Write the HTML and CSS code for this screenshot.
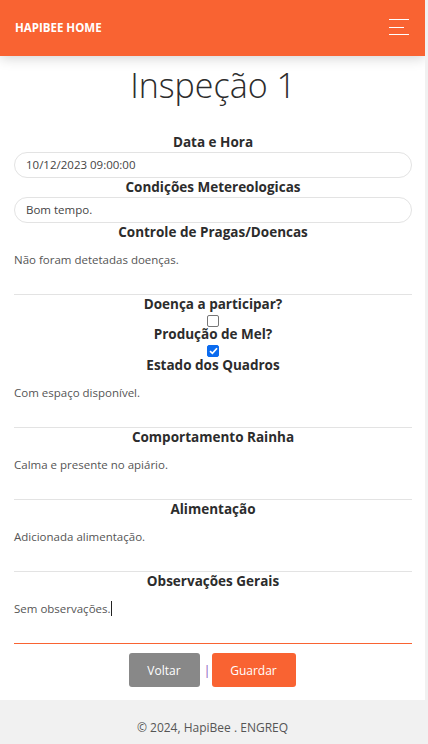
FILE: index.html
```html
<!DOCTYPE html>
<html lang="pt">
<head>
<meta charset="utf-8">
<title>Inspeção 1 - HapiBee</title>
<link rel="stylesheet" href="styles.css">
</head>
<body>
<header class="navbar">
  <a class="brand" href="#">HAPIBEE HOME</a>
  <button class="toggler" aria-label="menu">
    <svg width="20" height="16" viewBox="0 0 20 16">
      <rect x="0" y="0" width="20" height="1" fill="#fff"/>
      <rect x="0" y="8" width="15" height="1" fill="#fff"/>
      <rect x="0" y="15" width="20" height="1" fill="#fff"/>
    </svg>
  </button>
</header>
<main class="content">
  <h2 class="title">Inspeção 1</h2>
  <form class="form">
    <label class="label">Data e Hora</label>
    <div class="input">10/12/2023 09:00:00</div>
    <label class="label">Condições Metereologicas</label>
    <div class="input">Bom tempo.</div>
    <label class="label">Controle de Pragas/Doencas</label>
    <div class="area">Não foram detetadas doenças.</div>
    <label class="label">Doença a participar?</label>
    <div class="check-row"><span class="check"></span></div>
    <label class="label">Produção de Mel?</label>
    <div class="check-row tall"><span class="check checked">
      <svg width="9" height="8" viewBox="0 0 9 8"><path d="M1 4.2 L3.4 6.4 L8 1.2" fill="none" stroke="#fff" stroke-width="1.7"/></svg>
    </span></div>
    <label class="label">Estado dos Quadros</label>
    <div class="area">Com espaço disponível.</div>
    <label class="label">Comportamento Rainha</label>
    <div class="area">Calma e presente no apiário.</div>
    <label class="label">Alimentação</label>
    <div class="area">Adicionada alimentação.</div>
    <label class="label">Observações Gerais</label>
    <div class="area area-focused">Sem observações.<span class="caret"></span></div>
    <div class="actions">
      <button type="button" class="btn btn-gray">Voltar</button>
      <span class="sep">|</span>
      <button type="button" class="btn btn-orange">Guardar</button>
    </div>
  </form>
</main>
<footer class="footer">© 2024, HapiBee . ENGREQ</footer>
</body>
</html>
```
FILE: styles.css
```css
html {
  background: #f1f1f1;
}
body {
  margin: 0 3px 0 0;
  background: #fff;
  font-family: "Open Sans", "Liberation Sans", sans-serif;
  color: #2c2c2c;
}
.navbar {
  height: 56px;
  background: #f96332;
  display: flex;
  align-items: center;
  justify-content: space-between;
  padding: 0 16px 0 15px;
  box-shadow: 0 2px 12px rgba(0, 0, 0, 0.18);
  position: relative;
}
.brand {
  color: #fff;
  text-decoration: none;
  font-size: 11.5px;
  font-weight: 700;
  margin-top: -1px;
}
.toggler {
  background: none;
  border: 0;
  padding: 0;
  display: flex;
  margin-top: -3px;
}
.content {
  padding: 0 13px 0 14px;
}
.title {
  margin: 0;
  padding: 9px 0 28px;
  font-size: 34px;
  font-weight: 300;
  line-height: 40px;
  text-align: center;
  color: #2c2c2c;
}
.form {
  display: flex;
  flex-direction: column;
}
.label {
  display: block;
  text-align: center;
  font-weight: 700;
  font-size: 13.5px;
  line-height: 19px;
  color: #2c2c2c;
}
.input {
  height: 24px;
  border: 1px solid #e3e3e3;
  border-radius: 30px;
  padding: 0 11px;
  font-size: 11.5px;
  line-height: 24px;
  color: #444;
}
.area {
  border-bottom: 1px solid #e3e3e3;
  padding-top: 9px;
  box-sizing: border-box;
  height: 53px;
  font-size: 11.5px;
  line-height: 17px;
  color: #555;
}
.area-focused {
  border-bottom: 1px solid #f96332;
}
.caret {
  display: inline-block;
  width: 1px;
  height: 15px;
  background: #222;
  vertical-align: -3px;
}
.check-row {
  display: flex;
  justify-content: center;
  padding: 1px 0 0;
  height: 10px;
}
.check-row.tall {
  height: 11px;
}
.check {
  width: 10px;
  height: 10px;
  border: 1px solid #767676;
  border-radius: 2px;
  background: #fff;
  display: flex;
  align-items: center;
  justify-content: center;
}
.check.checked {
  background: #0b6bef;
  border-color: #0b6bef;
}
.actions {
  display: flex;
  justify-content: center;
  align-items: center;
  gap: 4px;
  margin: 9px 0 13px;
  padding-right: 2px;
}
.btn {
  height: 34px;
  border: 0;
  border-radius: 3px;
  color: #fff;
  font-family: "Open Sans", "Liberation Sans", sans-serif;
  font-size: 12px;
  padding: 0;
}
.btn-gray {
  background: #888;
  width: 71px;
}
.btn-orange {
  background: #f96332;
  width: 84px;
}
.sep {
  width: 4px;
  text-align: center;
  color: #8e5cc0;
  font-size: 13px;
}
.footer {
  background: #f1f1f1;
  text-align: center;
  font-size: 12px;
  line-height: 17px;
  padding: 19px 0 20px;
  color: #555;
}
```
